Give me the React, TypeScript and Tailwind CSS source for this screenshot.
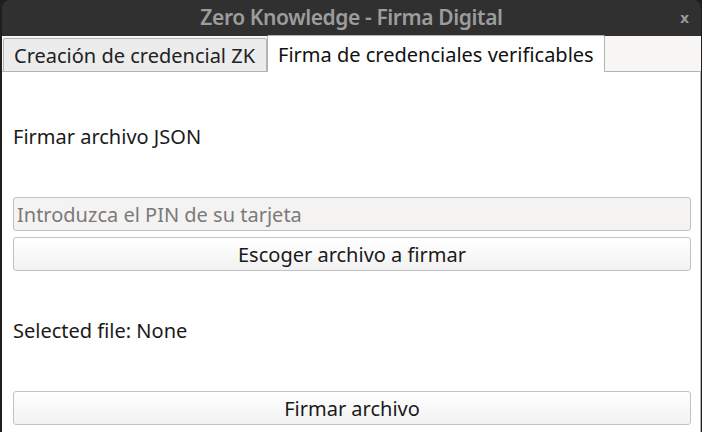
import React from "react";

export default function App() {
  const font = { fontFamily: '"Noto Sans", "Open Sans", sans-serif' };
  return (
    <div className="w-[702px] h-[432px] bg-[#1e1e1e] pl-[2px] pr-[1px] overflow-hidden" style={font}>
      <div className="flex flex-col h-full">
        <div className="h-[36px] bg-[#303030] rounded-t-[8px] relative flex items-center justify-center shrink-0">
          <span className="text-[#9c9c9c] text-[21px] font-semibold tracking-[-0.4px]">Zero Knowledge - Firma Digital</span>
          <span className="absolute right-[12px] top-[6px] text-[#9a9a9a] text-[15px] font-bold">x</span>
        </div>
        <div className="h-[36px] bg-[#f8f7f6] flex items-end border-b border-[#b4b4b4] shrink-0 pl-[1px] relative">
          <div className="h-[35px] mb-[-1px] flex items-end">
            <div className="h-[34px] bg-[#ececec] border border-[#b4b4b4] pl-[10px] pr-[11px] pt-[2px] flex items-center text-[20px] text-[#222] rounded-t-[2px]">
              Creación de credencial ZK
            </div>
            <div className="h-[37px] bg-white border border-b-0 border-[#b4b4b4] px-[10px] pt-[2px] flex items-center text-[20px] text-[#111] rounded-t-[2px]">
              Firma de credenciales verificables
            </div>
          </div>
        </div>
        <div className="flex-1 bg-white border-r border-[#b4b4b4] pl-[11px] pr-[9px] flex flex-col text-[20px] text-[#1a1a1a]">
          <div className="h-[125px] pt-[5px] flex items-center">Firmar archivo JSON</div>
          <div className="h-[34px] rounded-[3px] border border-[#c2c2c2] bg-[#f4f3f2] px-[3px] pt-[1px] flex items-center text-[#7a7a7a]">
            Introduzca el PIN de su tarjeta
          </div>
          <div className="mt-[6px] h-[34px] rounded-[3px] border border-[#c2c2c2] bg-gradient-to-b from-white to-[#f2f2f2] pt-[1px] flex items-center justify-center">
            Escoger archivo a firmar
          </div>
          <div className="h-[120px] flex items-center">Selected file: None</div>
          <div className="h-[34px] rounded-[3px] border border-[#c2c2c2] bg-gradient-to-b from-white to-[#f2f2f2] pt-[1px] flex items-center justify-center">
            Firmar archivo
          </div>
        </div>
      </div>
    </div>
  );
}
